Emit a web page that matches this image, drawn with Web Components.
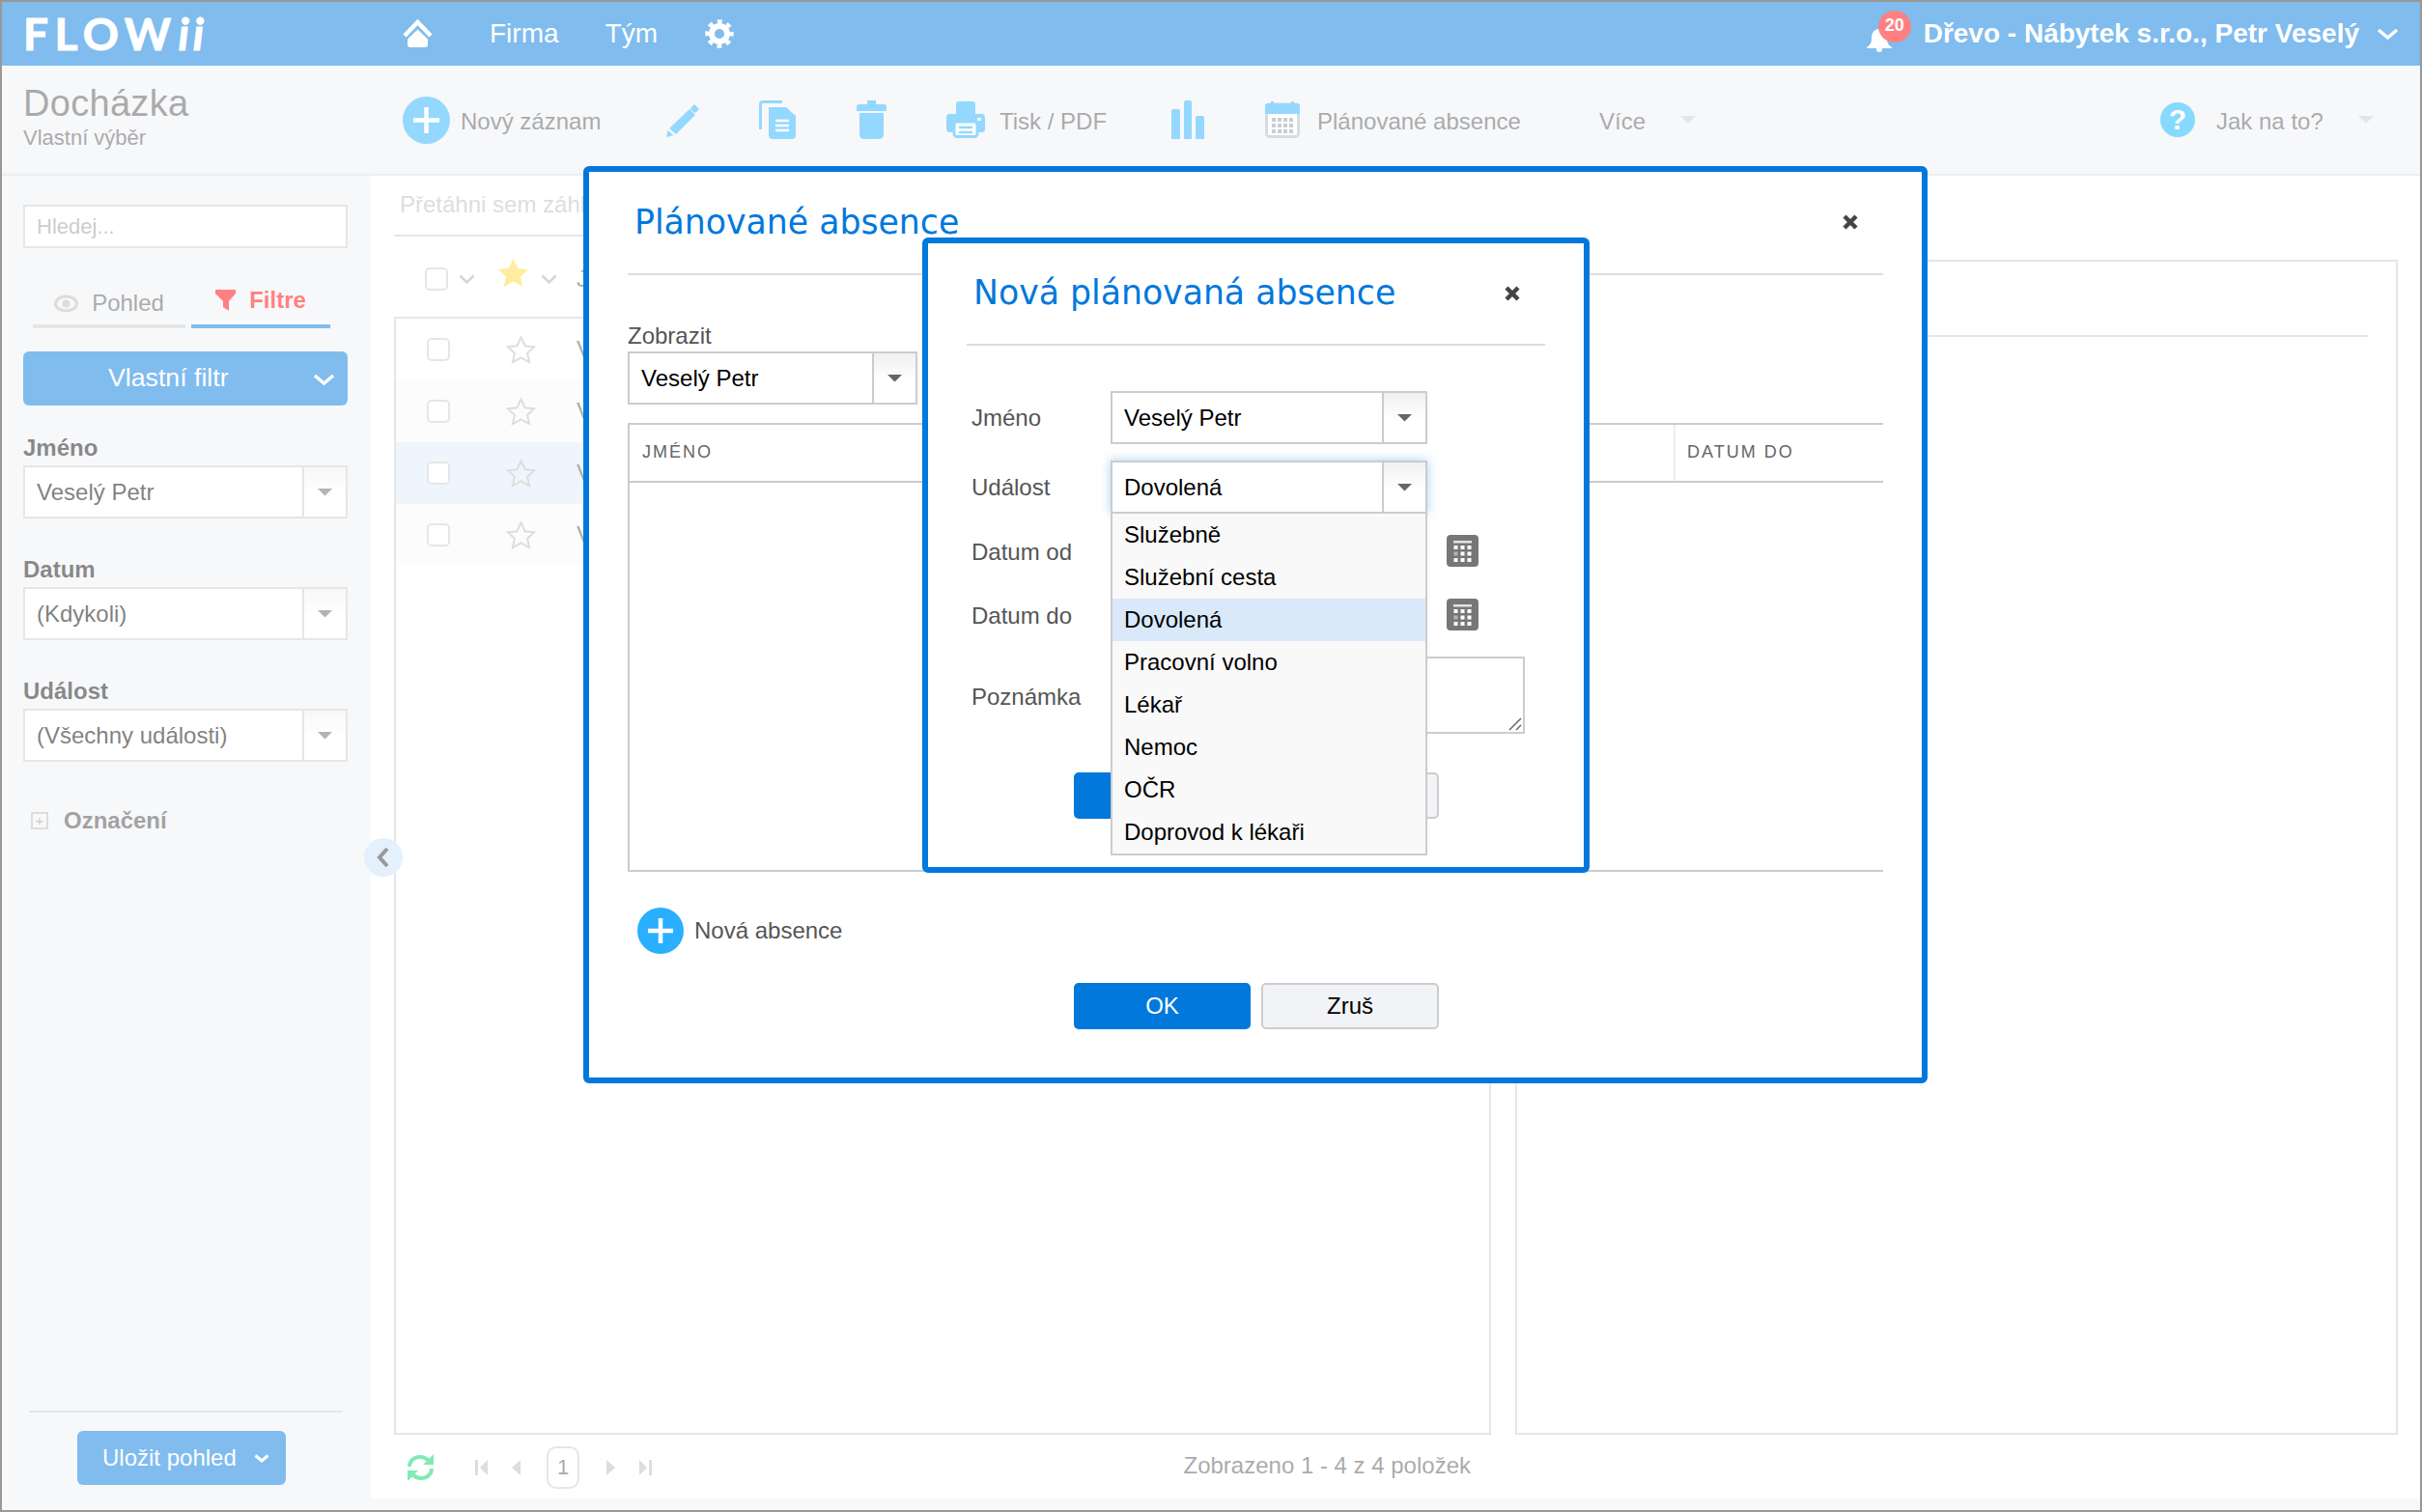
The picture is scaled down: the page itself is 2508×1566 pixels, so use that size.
<!DOCTYPE html>
<html lang="cs"><head><meta charset="utf-8"><title>Docházka</title>
<style>html,body{margin:0;padding:0;background:#fff}body{font:24px "Liberation Sans",Arial,sans-serif;width:2508px;height:1566px;overflow:hidden}</style>
<script>
const B='#29b0ff';
const ICONS={
home:[31,30,`<polyline points="2,17 15.5,3 29,17" fill="none" stroke="#fff" stroke-width="4.5"/><path fill="#fff" d="M15.5 10.5 26 20.5V26q0 3-3 3H8q-3 0-3-3v-5.500z"/>`],
gear:[30,30,`<circle cx="15" cy="15" r="8" fill="none" stroke="#fff" stroke-width="6"/><circle cx="15" cy="15" r="12.500" fill="none" stroke="#fff" stroke-width="4.500" stroke-dasharray="4.800 5" stroke-dashoffset="2.400"/>`],
bell:[30,26,`<path fill="#fff" d="M13 2C7 3 6 8 6 12c0 5-2 7-5 9v1h26v-1c-3-2-5-4-5-9 0-4-1-9-7-10z"/><circle cx="14" cy="23" r="3" fill="#fff"/>`],
chevw:[23,12,`<polyline points="2,2 11.500,10 21,2" fill="none" stroke="#fff" stroke-width="3.500"/>`],
chevw2:[16,9,`<polyline points="1.500,1.500 8,7 14.500,1.500" fill="none" stroke="#fff" stroke-width="3"/>`],
plus:[49,49,`<circle cx="24.500" cy="24.500" r="24.500" fill="${B}"/><path d="M24.500 11v27M11 24.500h27" stroke="#fff" stroke-width="4.500"/>`],
plus2:[48,48,`<circle cx="24" cy="24" r="24" fill="${B}"/><path d="M24 11v26M11 24h26" stroke="#fff" stroke-width="4.500"/>`],
pencil:[35,35,`<path fill="${B}" d="M24 6l6 6L10 32l-7-6zM26 4l3-3 5 5-3 3 0 0-2 1-4-4zM1.500 28l6 5L0 35z"/>`],
copy:[39,40,`<path fill="none" stroke="${B}" stroke-width="3" d="M24 1.500H4Q1.500 1.500 1.500 4V30"/><path fill="${B}" d="M10 7h18l10 9v20q0 4-4 4H14q-4 0-4-4z"/><path stroke="#fff" stroke-width="2.500" d="M17 21h14M17 26h14M17 31h14"/>`],
trash:[31,40,`<path fill="${B}" d="M11 0h9v4h8q3 0 3 3v4H0V7q0-3 3-3h8zM3 13h25v22q0 5-5 5H8q-5 0-5-5z"/>`],
print:[40,38,`<path fill="${B}" d="M10 3q0-3 3-3h14q3 0 3 3v10H10zM4 13h32q4 0 4 4v12q0 3-4 3H4q-4 0-4-3V17q0-4 4-4z"/><rect x="8" y="21" width="24" height="15.500" rx="3" fill="#fff" stroke="${B}" stroke-width="3"/><path stroke="${B}" stroke-width="2.500" d="M13 27h14M13 32h14"/><rect x="32" y="17" width="4" height="3" fill="#fff"/>`],
chart:[34,40,`<path fill="${B}" d="M0 11q0-2 2-2h5q2 0 2 2v29H0zM13 2q0-2 2-2h4q2 0 2 2v38h-8zM25 18q0-2 2-2h5q2 0 2 2v22h-9z"/>`],
cal:[36,38,`<rect x="1.500" y="3" width="33" height="33.500" rx="3" fill="#fff" stroke="#a9bcc4" stroke-width="3"/><path fill="${B}" d="M0 5q0-3 3-3h3V0h3v2h18V0h3v2h3q3 0 3 3v8H0z"/><g fill="#8d9ca2"><rect x="7" y="17" width="4" height="4"/><rect x="13" y="17" width="4" height="4"/><rect x="19" y="17" width="4" height="4"/><rect x="25" y="17" width="4" height="4"/><rect x="7" y="23" width="4" height="4"/><rect x="13" y="23" width="4" height="4"/><rect x="19" y="23" width="4" height="4"/><rect x="25" y="23" width="4" height="4"/><rect x="7" y="29" width="4" height="4"/><rect x="13" y="29" width="4" height="4"/><rect x="19" y="29" width="4" height="4"/><rect x="25" y="29" width="4" height="4"/></g>`],
help:[36,36,`<circle cx="18" cy="18" r="18" fill="#0db2ff"/><text x="18" y="28" text-anchor="middle" font-family="Liberation Sans" font-weight="700" font-size="30" fill="#fff">?</text>`],
arrow:[16,8,`<path fill="#c2ccd0" d="M0 0h16L8 8z"/>`],
eye:[25,17,`<ellipse cx="12.500" cy="8.500" rx="11" ry="7.500" fill="none" stroke="#b9b9b9" stroke-width="3"/><circle cx="12.500" cy="8.500" r="4" fill="#b9b9b9"/>`],
funnel:[21,22,`<path fill="#f00" d="M0 0h21v4l-7 8v10l-6-4v-6L0 4z"/>`],
star:[31,29,`<path fill="#ffd83c" d="M15.500 0l4.800 10 10.700 1.100-8 7.400 2.300 10.500-9.800-5.400L5.700 29 8 18.500 0 11.100 10.700 10z"/>`],
staro:[31,30,`<path fill="none" stroke="#bbb" stroke-width="2" d="M15.500 2.500l4.200 8.800 9.400 1-7 6.500 2 9.300-8.600-4.800-8.600 4.800 2-9.300-7-6.500 9.400-1z"/>`],
chevg:[17,10,`<polyline points="1.500,1.500 8.500,8.500 15.500,1.500" fill="none" stroke="#aaa" stroke-width="2.500"/>`],
calsm:[33,33,`<rect width="33" height="33" rx="4" fill="#777"/><g fill="#fff"><rect x="7" y="6" width="19" height="2.500" opacity=".8"/><rect x="7.500" y="11" width="4" height="4"/><rect x="14.500" y="11" width="4" height="4"/><rect x="21.500" y="11" width="4" height="4"/><rect x="7.500" y="17.500" width="4" height="4" opacity=".45"/><rect x="14.500" y="17.500" width="4" height="4"/><rect x="21.500" y="17.500" width="4" height="4"/><rect x="7.500" y="24" width="4" height="4"/><rect x="14.500" y="24" width="4" height="4"/><rect x="21.500" y="24" width="4" height="4"/></g>`],
refresh:[29,28,`<path fill="none" stroke="#00d765" stroke-width="4" d="M3 13C3 7 8 3 14 3c3 0 6 1 9 4M26 15c0 6-5 10-11 10-3 0-6-1-9-4"/><path fill="#00d765" d="M28 0v11H17zM1 28V17h11z"/>`],
first:[13,16,`<path fill="#bbb" d="M0 0h3v16H0zM13 0v16L5 8z"/>`],
prev:[9,16,`<path fill="#bbb" d="M9 0v16L0 8z"/>`],
next:[9,16,`<path fill="#bbb" d="M0 0v16l9-8z"/>`],
last:[13,16,`<path fill="#bbb" d="M13 0h-3v16h3zM0 0v16l8-8z"/>`],
x:[18,18,`<path d="M3 3l12 12M15 3 3 15" stroke="#444" stroke-width="4.500"/>`],
back:[14,24,`<polyline points="11,3 3,12 11,21" fill="none" stroke="#333" stroke-width="4"/>`],
grip:[14,14,`<path stroke="#666" stroke-width="1.500" d="M1 13 13 1M8 13l5-5"/>`]
};
function def(name,html){customElements.define(name,class extends HTMLElement{constructor(){super();this.attachShadow({mode:'open'}).innerHTML=html}})}
customElements.define('x-icon',class extends HTMLElement{
 constructor(){super();this.attachShadow({mode:'open'})}
 connectedCallback(){const [w,h,s]=ICONS[this.getAttribute('n')];
  this.shadowRoot.innerHTML=`<style>:host{display:block;flex:none;line-height:0;width:${w}px;height:${h}px}svg{display:block;overflow:visible}</style><svg width="${w}" height="${h}" viewBox="0 0 ${w} ${h}">${s}</svg>`}
});
def('x-select',`<style>
:host{display:flex;box-sizing:border-box;height:55px;border:2px solid #ccc;background:#fff;position:relative;color:#000;font:24px/51px "Liberation Sans",sans-serif}
:host([open]){box-shadow:0 0 10px rgba(90,170,240,.55);z-index:5}
.v{flex:1;padding-left:12px;white-space:nowrap;overflow:hidden}
.b{flex:none;width:43px;border-left:2px solid #ccc;display:flex;align-items:center;justify-content:center;background:linear-gradient(#f0f0f0,#fff 55%)}
.t{width:16px;height:8px;background:#666;clip-path:polygon(0 0,100% 0,50% 100%)}
.l{display:none;position:absolute;left:-2px;right:-2px;top:51px;box-sizing:border-box;border:2px solid #ccc;background:#f9f9f9;box-shadow:none}
:host([open]) .l{display:block}
</style><div class="v"><slot></slot></div><div class="b"><div class="t"></div></div><div class="l"><slot name="list"></slot></div>`);
def('x-option',`<style>:host{display:block;height:44px;line-height:44px;padding-left:12px;color:#000;font-size:24px}:host([selected]){background:#d9e9f9}</style><slot></slot>`);
def('x-btn',`<style>:host{display:block;box-sizing:border-box;width:183px;height:48px;border-radius:5px;border:2px solid #ccc;background:#f2f3f7;color:#000;text-align:center;font:24px/44px "Liberation Sans",sans-serif;flex:none}:host([primary]){background:#0078dc;border-color:#0078dc;color:#fff}</style><slot></slot>`);
def('x-modal',`<style>
:host{display:block;position:absolute;box-sizing:border-box;border:6px solid #0078dc;border-radius:6px;background:#fff;padding:0 40px;font:24px "Liberation Sans",sans-serif;color:#555}
.h{display:flex;justify-content:space-between;border-bottom:2px solid #ddd;box-sizing:border-box;height:var(--hh,107px);padding:var(--hp,32px) 0 0 var(--tx,7px)}
h2{margin:0;font:34.700px/40px "DejaVu Sans",sans-serif;color:#0078dc;white-space:nowrap}
.c{margin:var(--cy,11px) 25px 0 0}
</style><div class="h"><h2><slot name="title"></slot></h2><div class="c"><x-icon n="x"></x-icon></div></div><slot></slot>`);
def('x-row',`<style>:host{display:grid;grid-template-columns:149px auto;align-items:center;color:#555;font-size:24px}.l{padding-left:5px}</style><div class="l"><slot name="label"></slot></div><div style="display:flex;align-items:center;gap:21px"><slot></slot></div>`);
def('x-topbar',`<style>
:host{display:flex;align-items:center;height:66px;flex:none;background:#0078dc;color:#fff;padding:0 22px;font:28px "Liberation Sans",sans-serif;box-sizing:border-box}
.logo{width:393px;flex:none;font:700 46px/50px Lato,sans-serif;letter-spacing:6.500px;white-space:nowrap;-webkit-text-stroke:1px #fff}
.logo i{letter-spacing:4px;margin-left:1px}
.bell{position:relative;width:47px;height:26px;margin:11px 0 0 auto;flex:none}
.badge{position:absolute;left:13px;top:-17px;width:34px;height:33px;border-radius:50%;background:#ff0000;font:700 18px/31px "Liberation Sans",sans-serif;text-align:center}
b{margin-left:13px;white-space:nowrap}
</style><div class="logo">FLOW<i>ii</i></div><x-icon n="home"></x-icon><span style="margin-left:59px">Firma</span><span style="margin-left:48px">Tým</span><x-icon n="gear" style="margin-left:49px"></x-icon>
<div class="bell"><x-icon n="bell"></x-icon><div class="badge">20</div></div><b>Dřevo - Nábytek s.r.o., Petr Veselý</b><x-icon n="chevw" style="margin-left:18px"></x-icon>`);
def('x-toolbar',`<style>
:host{display:flex;align-items:center;height:114px;flex:none;box-sizing:border-box;background:#eff1f5;border-bottom:2px solid #d9dde2;padding:0 48px 0 22px;color:#555;font:24px "Liberation Sans",sans-serif}
.t{width:393px;flex:none;padding-bottom:6px}
h1{margin:-2px 0 0;font:400 38px/42px "Liberation Sans",sans-serif;letter-spacing:.3px}
small{display:block;font-size:22px;line-height:24px;margin-top:3px}
span{white-space:nowrap;flex:none;padding-top:3px}
x-icon{flex:none}
</style><div class="t"><h1>Docházka</h1><small>Vlastní výběr</small></div>
<x-icon n="plus"></x-icon><span style="margin-left:11px;width:145px">Nový záznam</span>
<x-icon n="pencil" style="margin-left:68px"></x-icon><x-icon n="copy" style="margin-left:61px"></x-icon><x-icon n="trash" style="margin-left:62px"></x-icon>
<x-icon n="print" style="margin-left:62px"></x-icon><span style="margin-left:15px;width:112px">Tisk / PDF</span>
<x-icon n="chart" style="margin-left:66px"></x-icon><x-icon n="cal" style="margin-left:63px"></x-icon><span style="margin-left:18px;width:210px">Plánované absence</span>
<span style="margin-left:82px;width:48px">Více</span><x-icon n="arrow" style="margin-left:36px"></x-icon>
<x-icon n="help" style="margin-left:auto"></x-icon><span style="margin-left:22px;width:110px">Jak na to?</span><x-icon n="arrow" style="margin-left:37px"></x-icon>`);
def('x-sidebar',`<style>
:host{display:flex;flex-direction:column;width:382px;flex:none;box-sizing:border-box;background:#eff1f5;padding:30px 24px 26px 22px;font:24px "Liberation Sans",sans-serif;color:#000}
.s{box-sizing:border-box;height:45px;border:2px solid #ccc;background:#fff;padding-left:12px;font-size:22px;line-height:41px;color:#999}
.tabs{display:flex;gap:6px;margin:39px 0 0 10px;height:44px}
.tab{box-sizing:border-box;border-bottom:4px solid #ccc;display:flex;align-items:center;justify-content:center;gap:14px;color:#555;padding-bottom:4px}
.tab.on{border-color:#0078dc;color:#f00;font-weight:700;padding-bottom:10px}
.main{margin-top:24px;height:56px;border-radius:6px;background:#0078dc;color:#fff;font-size:26.700px;line-height:54px;display:flex;padding-left:88px;position:relative}
.main x-icon{margin:23px 0 0 auto;margin-right:13px}
label{display:block;font-weight:700;line-height:28px;margin:39px 0 4px;color:#111}
.mk{display:flex;align-items:center;gap:16px;margin:47px 0 0 8px;font-weight:700;line-height:28px;color:#444}
.pb{width:14px;height:14px;border:2px solid #bbb;color:#999;font:400 15px/14px "Liberation Sans";text-align:center}
.f{margin-top:auto;border-top:2px solid #ccc;margin-left:6px;margin-right:6px;padding-top:19px;}
.u{width:216px;height:56px;margin-left:50px;border-radius:6px;background:#0078dc;color:#fff;display:flex;align-items:center;padding-left:26px;box-sizing:border-box;gap:18px}
</style><div class="s">Hledej...</div>
<div class="tabs"><div class="tab" style="width:158px"><x-icon n="eye"></x-icon><span>Pohled</span></div><div class="tab on" style="width:144px"><x-icon n="funnel"></x-icon><span>Filtre</span></div></div>
<div class="main"><span>Vlastní filtr</span><x-icon n="chevw"></x-icon></div>
<label style="margin-top:30px">Jméno</label><x-select>Veselý Petr</x-select>
<label>Datum</label><x-select>(Kdykoli)</x-select>
<label>Událost</label><x-select>(Všechny události)</x-select>
<div class="mk"><div class="pb">+</div><span>Označení</span></div>
<div class="f"><div class="u"><span>Uložit pohled</span><x-icon n="chevw2"></x-icon></div></div>`);
def('x-list-row',`<style>:host{display:flex;align-items:center;height:64px;padding-left:32px;color:#555;font-size:24px}:host([alt]){background:#f8f8f8}:host([sel]){background:#dceafb}
.c{width:20px;height:20px;border:2px solid #ccc;border-radius:5px;background:#fff;flex:none}</style><div class="c"></div><x-icon n="staro" style="margin:0 42px 0 58px"></x-icon><slot></slot>`);
def('x-content',`<style>
:host{flex:1;display:grid;grid-template-columns:1136px 914px;grid-template-rows:1fr;column-gap:25px;padding:0 23px 12px 24px;box-sizing:border-box;background:linear-gradient(#fff calc(100% - 12px),#eff1f5 0);font:24px "Liberation Sans",sans-serif;color:#555;position:relative;min-height:0;min-width:0}
.l{display:flex;flex-direction:column;min-height:0}
.g{height:61px;line-height:60px;border-bottom:2px solid #ccc;color:#bbb;font-size:24px;padding-left:6px;flex:none;white-space:nowrap}
.hd{height:83px;flex:none;display:flex;align-items:center;padding:4px 0 0 32px;box-sizing:border-box}
.c{width:20px;height:20px;border:2px solid #ccc;border-radius:5px;background:#fff;flex:none}
.p{flex:1;border:2px solid #ccc;background:#fff;min-height:0}
.pg{height:66px;flex:none;display:flex;align-items:center;padding:2px 21px 0 13px;box-sizing:border-box}
.n{width:34px;height:44px;box-sizing:border-box;border:2px solid #ccc;border-radius:10px;text-align:center;line-height:40px;font-size:22px;margin:0 28px 0 27px}
.z{margin:-4px 0 0 auto}
.r{margin:87px 0 66px;border:2px solid #ccc;background:#fff;padding:76px 29px 0 0;min-height:0}
.r div{border-top:2px solid #ccc}
.col{position:absolute;left:-7px;top:686px;width:40px;height:40px;border-radius:50%;background:#c8e0f6;display:flex;align-items:center;justify-content:center}
</style><div class="l"><div class="g">Přetáhni sem záhl</div>
<div class="hd"><div class="c"></div><x-icon n="chevg" style="margin-left:11px"></x-icon><x-icon n="star" style="margin:-12px 0 0 24px"></x-icon><x-icon n="chevg" style="margin-left:13px"></x-icon><span style="margin-left:20px">J</span></div>
<div class="p"><x-list-row>V</x-list-row><x-list-row alt>V</x-list-row><x-list-row sel>V</x-list-row><x-list-row alt>V</x-list-row></div>
<div class="pg"><x-icon n="refresh"></x-icon><x-icon n="first" style="margin-left:42px"></x-icon><x-icon n="prev" style="margin-left:25px"></x-icon><div class="n" >1</div><x-icon n="next"></x-icon><x-icon n="last" style="margin-left:25px"></x-icon><span class="z">Zobrazeno 1 - 4 z 4 položek</span></div></div>
<div class="r"><div></div></div><div class="col"><x-icon n="back"></x-icon></div>`);
def('x-app',`<style>
:host{display:flex;flex-direction:column;position:relative;box-sizing:border-box;width:2508px;height:1566px;border:2px solid #9b9795;overflow:hidden;background:#fff;font:24px "Liberation Sans",sans-serif}
.m{flex:1;display:flex;min-height:0}
.o{position:absolute;inset:0;background:rgba(255,255,255,.5)}
.lbl{line-height:28px;margin-top:49px;color:#555}
.tb{margin-top:19px;height:465px;box-sizing:border-box;border:solid #ccc;border-width:2px 0 2px 2px;display:flex;flex-direction:column}
.th{height:58px;flex:none;border-bottom:2px solid #ccc;display:flex;font-size:18px;letter-spacing:2px;color:#666;line-height:56px;padding-left:13px}
.th span:last-child{margin-left:auto;border-left:2px solid #eee;width:203px;padding-left:12px}
.add{display:flex;align-items:center;gap:11px;margin:37px 0 0 10px}
.bs{display:flex;gap:11px}
.in{box-sizing:border-box;width:327px;height:46px;border:2px solid #ccc}
.ta{box-sizing:border-box;width:429px;height:80px;border:2px solid #ccc;position:relative;display:flex;align-items:flex-end;justify-content:flex-end;padding:0 1px 1px 0}
</style><x-topbar></x-topbar><x-toolbar></x-toolbar><div class="m"><x-sidebar></x-sidebar><x-content></x-content></div><div class="o"></div>
<x-modal style="left:602px;top:170px;width:1392px;height:950px">
 <span slot="title">Plánované absence</span>
 <div class="lbl">Zobrazit</div>
 <x-select style="width:300px;margin-top:2px">Veselý Petr</x-select>
 <div class="tb"><div class="th"><span>JMÉNO</span><span>DATUM DO</span></div></div>
 <div class="add"><x-icon n="plus2"></x-icon><span>Nová absence</span></div>
 <div class="bs" style="margin:30px 0 0 462px"><x-btn primary>OK</x-btn><x-btn style="width:184px">Zruš</x-btn></div>
</x-modal>
<x-modal style="left:953px;top:244px;width:691px;height:658px;--hh:106px;--hp:31px;--cy:12px">
 <span slot="title">Nová plánovaná absence</span>
 <x-row style="margin-top:47px"><span slot="label">Jméno</span><x-select style="width:328px">Veselý Petr</x-select></x-row>
 <x-row style="margin-top:17px;position:relative;z-index:5"><span slot="label">Událost</span><x-select open style="width:328px">Dovolená
   <div slot="list"><x-option>Služebně</x-option><x-option>Služební cesta</x-option><x-option selected>Dovolená</x-option><x-option>Pracovní volno</x-option><x-option>Lékař</x-option><x-option>Nemoc</x-option><x-option>OČR</x-option><x-option>Doprovod k lékaři</x-option></div>
 </x-select></x-row>
 <x-row style="margin-top:15px"><span slot="label" style="display:block;padding-top:3px">Datum od</span><div class="in"></div><x-icon n="calsm"></x-icon></x-row>
 <x-row style="margin-top:20px"><span slot="label" style="display:block;padding-top:3px">Datum do</span><div class="in"></div><x-icon n="calsm"></x-icon></x-row>
 <x-row style="margin-top:21px"><span slot="label" style="display:block;padding-top:3px">Poznámka</span><div class="ta"><x-icon n="grip"></x-icon></div></x-row>
 <div class="bs" style="margin:40px 0 0 111px"><x-btn primary aria-label="OK"></x-btn><x-btn style="width:184px" aria-label="Zruš"></x-btn></div>
</x-modal>`);
</script></head><body><x-app></x-app></body></html>
